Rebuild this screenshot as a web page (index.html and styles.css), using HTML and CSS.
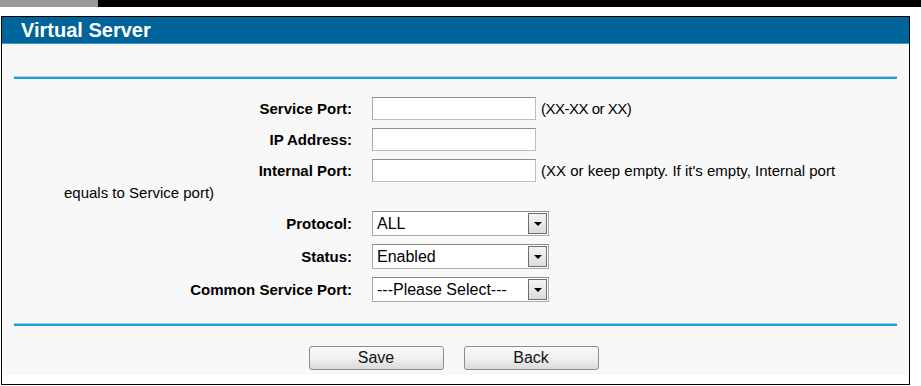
FILE: index.html
```html
<!DOCTYPE html>
<html lang="en">
<head>
    <meta charset="UTF-8">
    <title>Virtual Server</title>
    <link rel="stylesheet" href="styles.css">
</head>
<body>
    <div class="topbar">
        <div class="topbar-left"></div>
        <div class="topbar-right"></div>
    </div>

    <div class="panel">
        <div class="panel-head">Virtual Server</div>
        <div class="panel-body">
            <div class="rule"></div>

            <div class="form">
                <div class="row">
                    <label class="item">Service Port:</label>
                    <div class="field">
                        <input type="text" class="text">
                        <span class="hint hint-tight">(XX-XX or XX)</span>
                    </div>
                </div>
                <div class="row">
                    <label class="item">IP Address:</label>
                    <div class="field">
                        <input type="text" class="text">
                    </div>
                </div>
                <div class="row">
                    <label class="item">Internal Port:</label>
                    <div class="field">
                        <input type="text" class="text">
                        <span class="hint">(XX or keep empty. If it's empty, Internal port</span>
                    </div>
                </div>
                <div class="wrap-line">equals to Service port)</div>

                <div class="row row-select">
                    <label class="item">Protocol:</label>
                    <div class="field">
                        <span class="select">
                            <select><option>ALL</option><option>TCP</option><option>UDP</option></select>
                            <span class="arrow"></span>
                        </span>
                    </div>
                </div>
                <div class="row row-select">
                    <label class="item">Status:</label>
                    <div class="field">
                        <span class="select">
                            <select><option>Enabled</option><option>Disabled</option></select>
                            <span class="arrow"></span>
                        </span>
                    </div>
                </div>
                <div class="row row-select">
                    <label class="item">Common Service Port:</label>
                    <div class="field">
                        <span class="select">
                            <select><option>---Please Select---</option><option>DNS</option><option>FTP</option></select>
                            <span class="arrow"></span>
                        </span>
                    </div>
                </div>
            </div>

            <div class="rule rule-bottom"></div>

            <div class="buttons">
                <button type="button">Save</button>
                <button type="button">Back</button>
            </div>
        </div>
    </div>
</body>
</html>
```

FILE: styles.css
```css
body {
    margin: 0;
    background: #fff;
    font-family: "Liberation Sans", Arial, sans-serif;
    color: #000;
}
.topbar {
    display: flex;
    height: 7px;
}
.topbar-left {
    width: 98px;
    background: #999;
}
.topbar-right {
    flex: 1;
    background: #000;
}
.panel {
    margin: 9px 11px 0 1px;
    border: 1px solid #000;
    height: 367px;
    display: flex;
    flex-direction: column;
    background: #fff;
}
.panel-head {
    height: 26px;
    line-height: 27px;
    background: #00649a;
    border-bottom: 1px solid #4a92be;
    color: #fff;
    font-weight: bold;
    font-size: 20px;
    padding-left: 19px;
}
.panel-body {
    background: #f8f8f8;
    margin: 0 1px;
    padding: 32px 11px 0 11px;
    height: 299px;
}
.rule {
    height: 3px;
    background: #1ba0d6;
    border-top: 1px solid #9fd2ea;
    box-sizing: border-box;
}
.form {
    padding-top: 14px;
}
.row {
    display: grid;
    grid-template-columns: 338px 1fr;
    column-gap: 20px;
    align-items: center;
    height: 31px;
}
.row-select {
    height: 33px;
}
.item {
    text-align: right;
    font-weight: bold;
    font-size: 15px;
}
.field {
    display: flex;
    align-items: center;
    gap: 5px;
}
.hint {
    font-size: 15px;
}
.hint-tight {
    letter-spacing: -0.5px;
}
.text {
    box-sizing: border-box;
    width: 164px;
    height: 23px;
    margin: 0;
    border: 1px solid #bdbdbd;
    border-top-color: #8d8d8d;
    border-left-color: #a8a8a8;
    background: #fff;
    font: 15px "Liberation Sans", Arial, sans-serif;
}
.wrap-line {
    font-size: 15px;
    padding-left: 50px;
    height: 14px;
    line-height: 14px;
    margin-bottom: 7px;
}
.select {
    display: inline-flex;
    box-sizing: border-box;
    width: 177px;
    height: 25px;
    border: 1px solid #a9a9a9;
    border-top-color: #8a8a8a;
    background: #fff;
}
.select select {
    appearance: none;
    -webkit-appearance: none;
    flex: 1;
    min-width: 0;
    border: none;
    outline: none;
    background: transparent;
    margin: 0;
    padding: 0 4px;
    font: 16px "Liberation Sans", Arial, sans-serif;
    color: #000;
}
.arrow {
    position: relative;
    width: 19px;
    margin: 1px 1px 1px 0;
    box-sizing: border-box;
    border: 1px solid #6d6d6d;
    background: linear-gradient(#f4f4f4, #dcdcdc);
}
.arrow::after {
    content: "";
    position: absolute;
    left: 5px;
    top: 8px;
    border-left: 4px solid transparent;
    border-right: 4px solid transparent;
    border-top: 4px solid #000;
}
.rule-bottom {
    margin-top: 17px;
}
.buttons {
    display: flex;
    justify-content: center;
    gap: 20px;
    padding-top: 20px;
    padding-right: 4px;
}
button {
    width: 135px;
    height: 24px;
    border: 1px solid #8c8c8c;
    border-radius: 3px;
    background: linear-gradient(#fafafa, #f0f0f0 50%, #dadada);
    font: 16px "Liberation Sans", Arial, sans-serif;
    color: #111;
    padding: 0;
}
```
